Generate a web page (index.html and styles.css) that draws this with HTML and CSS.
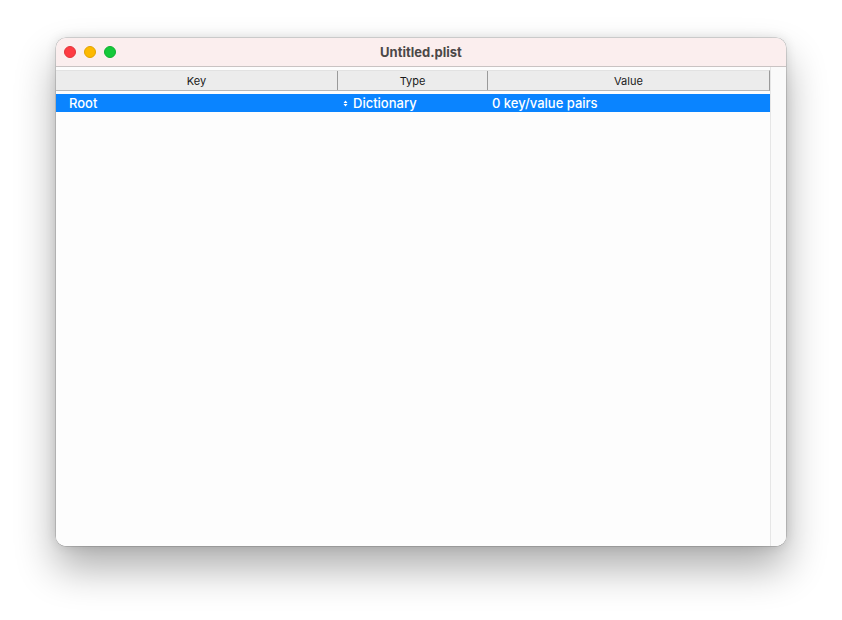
FILE: index.html
```html
<!DOCTYPE html>
<html>
<head>
<meta charset="utf-8">
<link rel="stylesheet" href="styles.css">
</head>
<body>
<div class="window">
  <div class="titlebar">
    <div class="lights">
      <span class="light red"></span>
      <span class="light yellow"></span>
      <span class="light green"></span>
    </div>
    <div class="title">Untitled.plist</div>
  </div>
  <div class="content">
    <div class="table">
      <div class="header">
        <div class="hcell key">Key</div>
        <div class="hcell type">Type</div>
        <div class="hcell value">Value</div>
      </div>
      <div class="row selected">
        <div class="cell key">Root</div>
        <div class="cell type"><span class="stepper"><svg width="5" height="7" viewBox="0 0 5 7"><path d="M0.5 3 L2.5 0.5 L4.5 3 Z M0.5 4 L2.5 6.5 L4.5 4 Z" fill="#fff"/></svg></span>Dictionary</div>
        <div class="cell value">0 key/value pairs</div>
      </div>
    </div>
    <div class="scroll"></div>
  </div>
</div>
</body>
</html>
```
FILE: styles.css
```css
html, body {
  margin: 0;
  padding: 0;
  background: #ffffff;
}
body {
  font-family: "Inter", "Liberation Sans", sans-serif;
  padding: 38px 0 0 56px;
  height: 620px;
  box-sizing: border-box;
  overflow: hidden;
}
.window {
  width: 730px;
  height: 508px;
  border-radius: 10px;
  background: #fdfdfd;
  box-shadow: 0 0 0 0.5px rgba(0,0,0,0.25), 0 22px 40px rgba(0,0,0,0.32), 0 0 12px rgba(0,0,0,0.12);
  overflow: hidden;
  display: flex;
  flex-direction: column;
}
.titlebar {
  height: 28px;
  background: #fbeeee;
  border-bottom: 1px solid #c9c3c3;
  display: flex;
  align-items: center;
  position: relative;
  flex: none;
}
.lights {
  display: flex;
  gap: 8px;
  padding-left: 8px;
}
.light {
  width: 12px;
  height: 12px;
  border-radius: 50%;
  box-sizing: border-box;
}
.red { background: #fe3b42; border: 0.5px solid #e0353a; }
.yellow { background: #fdb900; border: 0.5px solid #e0a300; }
.green { background: #14c93a; border: 0.5px solid #10b030; }
.title {
  position: absolute;
  left: 0;
  right: 0;
  text-align: center;
  font-size: 13px;
  font-weight: 700;
  color: #4b4848;
  top: 6px;
}
.content {
  flex: 1;
  display: flex;
  background: #fdfdfd;
}
.table {
  flex: 1;
  padding-top: 3px;
  background: #fdfdfd;
}
.header {
  display: flex;
  height: 19px;
  background: #ececec;
  border-top: 1px solid #e2e2e2;
  border-bottom: 1px solid #b9b9b9;
  border-right: 1px solid #9a9a9a;
  box-sizing: content-box;
  margin-bottom: 3px;
}
.hcell {
  font-size: 11px;
  color: #1a1a1a;
  text-align: center;
  line-height: 21px;
  box-sizing: border-box;
}
.hcell.key { width: 282px; border-right: 1px solid #9a9a9a; }
.hcell.type { width: 150px; border-right: 1px solid #9a9a9a; }
.hcell.value { flex: 1; }
.row {
  display: flex;
  height: 18px;
  align-items: center;
}
.row.selected {
  background: #0a84ff;
  color: #ffffff;
}
.cell {
  font-size: 13px;
  line-height: 18px;
  white-space: nowrap;
  font-weight: 500;
}
.cell.key { width: 282px; padding-left: 13px; box-sizing: border-box; }
.cell.type { width: 150px; padding-left: 5px; box-sizing: border-box; display: flex; align-items: center; }
.cell.value { flex: 1; padding-left: 4px; }
.stepper { display: inline-flex; width: 10px; align-items: center; }
.scroll {
  width: 15px;
  flex: none;
  background: #fafafa;
  border-left: 1px solid #e6e6e6;
}
```
